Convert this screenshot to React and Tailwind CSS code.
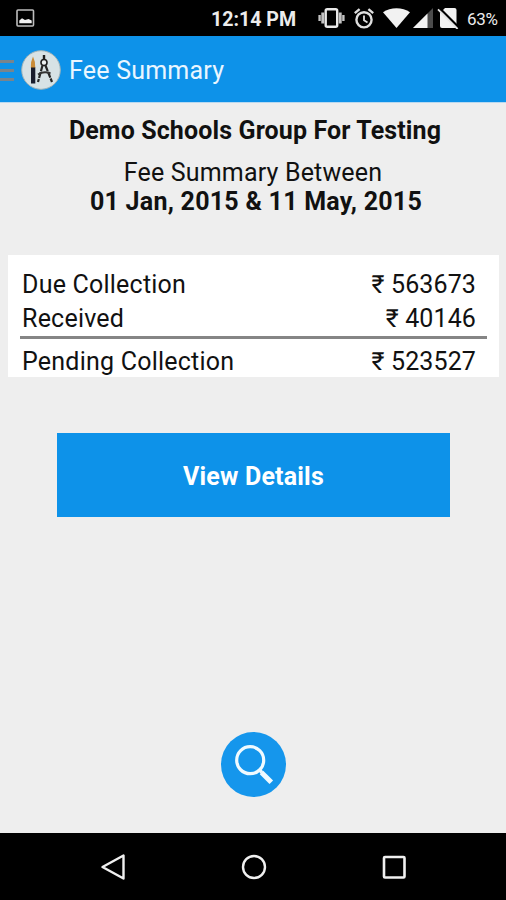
const fees = [
  { label: 'Due Collection', amount: '563673' },
  { label: 'Received', amount: '40146' },
]

export default function App() {
  return (
    <div className="flex h-[900px] w-[506px] flex-col overflow-hidden bg-[#eeeeee] font-['Roboto',sans-serif] text-[#111111]">
      <StatusBar />

      {/* Action bar */}
      <header className="flex h-[67px] shrink-0 items-center border-b border-[#b9d9f0] bg-[#0d92e9] pt-[2px]">
        <div className="flex w-[14px] flex-col gap-[6px]">
          <span className="h-[3px] bg-[#78848d]" />
          <span className="h-[3px] bg-[#78848d]" />
          <span className="h-[3px] bg-[#78848d]" />
        </div>
        <LogoIcon />
        <h1 className="ml-[8px] pt-[2px] text-[25px] leading-[30px] tracking-[0.22px] text-[#eaf6ff]">Fee Summary</h1>
      </header>

      <main className="flex flex-1 flex-col">
        <div className="pt-[13px] text-center">
          <h2 className="pl-[4px] text-[25px] leading-[30px] font-bold tracking-[0.12px]">Demo Schools Group For Testing</h2>
          <p className="mt-[12px] text-[25px] leading-[29px] tracking-[0.17px]">Fee Summary Between</p>
          <p className="pl-[6px] text-[25px] leading-[30px] font-bold tracking-[0.25px]">01 Jan, 2015 &amp; 11 May, 2015</p>
        </div>

        {/* Totals */}
        <section className="mt-[38px] mr-[7px] ml-[8px] h-[122px] bg-white pt-[12px]">
          {fees.map((fee) => (
            <FeeRow key={fee.label} {...fee} />
          ))}
          <div className="mr-[12px] ml-[12px] h-[3px] bg-[#858585]" />
          <div className="pt-[5px]">
            <FeeRow label="Pending Collection" amount="523527" />
          </div>
        </section>

        <button className="mt-[56px] ml-[57px] h-[84px] w-[393px] bg-[#0d92e9] pt-[4px] text-[25px] font-bold tracking-[0.18px] text-white">
          View Details
        </button>

        <button className="mt-auto mb-[36.5px] ml-[221px] h-[65px] w-[65px] rounded-full bg-[#1596ec]">
          <SearchIcon />
        </button>
      </main>

      <NavBar />
    </div>
  )
}

function FeeRow({ label, amount }) {
  return (
    <div className="flex h-[34.5px] items-center justify-between pr-[23px] pl-[14px] text-[25px] leading-[35px]">
      <span className="tracking-[0.22px]">{label}</span>
      <span className="tracking-[0.12px]">₹ {amount}</span>
    </div>
  )
}

function StatusBar() {
  return (
    <div className="flex h-[36px] shrink-0 items-center bg-black text-[#ececec]">
      <svg className="ml-[16px] h-[18px] w-[19px]" viewBox="0 0 19 18" fill="none">
        <rect x="1" y="1" width="16.5" height="16" rx="1" stroke="#bdbdbd" strokeWidth="1.6" />
        <path d="M3.3 14.2V11.5L6 9.2l3 1.8 3.5-1 3.2 1.5v2.7z" fill="#f2f2f2" />
      </svg>
      <span className="ml-[176px] w-[85px] pt-[3px] text-[19.6px] font-bold whitespace-nowrap">12:14 PM</span>

      {/* Vibrate */}
      <svg className="ml-[22px] h-[20px] w-[27px]" viewBox="0 0 27 20" fill="none">
        <rect x="7.7" y="1.2" width="11.5" height="17.6" rx="1.5" stroke="#e8e8e8" strokeWidth="2.4" />
        <path d="M4.8 4.5v11M22.2 4.5v11" stroke="#c4c4c4" strokeWidth="3" />
        <path d="M1.6 7v6M25.4 7v6" stroke="#c4c4c4" strokeWidth="2.4" />
      </svg>

      {/* Alarm */}
      <svg className="ml-[9px] h-[21px] w-[20px]" viewBox="0 0 20 21" fill="none" stroke="#dedede">
        <circle cx="10" cy="11.8" r="7.6" strokeWidth="2.4" />
        <path d="M10 7.5v4.8l3.5 2.2" strokeWidth="1.8" />
        <path d="M.8 5.2 5.6 1.2M14.4 1.2l4.8 4" strokeWidth="2.4" />
      </svg>

      {/* Wifi */}
      <svg className="ml-[9px] h-[20px] w-[27px]" viewBox="0 0 27 20" fill="#f2f2f2">
        <path d="M0 4.2C7.5-1.2 19.5-1.2 27 4.2L13.5 20z" />
      </svg>

      {/* Signal */}
      <svg className="ml-[3px] h-[20px] w-[20px]" viewBox="0 0 20 20">
        <path d="M0 20 20 0v20z" fill="#4b4b4b" />
        <path d="M0 20 14.5 5.5V20z" fill="#f2f2f2" />
      </svg>

      {/* No sim */}
      <svg className="ml-[4px] h-[22px] w-[22px]" viewBox="0 0 22 22">
        <path d="M8 1h9.5q2 0 2 2v18H5q-2 0-2-2V6z" fill="#f2f2f2" />
        <path d="M2.4 1 22 20.6" stroke="#000" strokeWidth="2.4" />
        <path d="M1 2.4 20.6 22" stroke="#e5e5e5" strokeWidth="1.8" />
      </svg>
      <span className="ml-[8px] pt-[3px] text-[17px] tracking-[-0.3px] whitespace-nowrap">63%</span>
    </div>
  )
}

function LogoIcon() {
  return (
    <svg className="ml-[7px] h-[40px] w-[40px]" viewBox="0 0 40 40" fill="none">
      <circle cx="20" cy="20" r="19.3" fill="#d7e2e5" stroke="#9fb3b8" strokeWidth="1" />
      {/* Brush */}
      <path d="M9.8 18Q9.3 12 12 6.5q2.700 5.500 2.300 11.500z" fill="#c98b38" />
      <path d="M10 17.500h4.300V33.500H10z" fill="#191c2c" />
      {/* Compass */}
      <path d="M23 5v5" stroke="#1e1e1e" strokeWidth="2.4" />
      <circle cx="23" cy="12.5" r="3" stroke="#1e1e1e" strokeWidth="1.6" fill="#eef2f3" />
      <path d="M21.5 15.5 17 32M24.5 15.5 31 32" stroke="#252525" strokeWidth="2.2" strokeDasharray="6 1" />
      <path d="M17 24.5q6-4 12.5-1" stroke="#333" strokeWidth="2" />
    </svg>
  )
}

function SearchIcon() {
  return (
    <svg className="h-[65px] w-[65px]" viewBox="0 0 65 65" fill="none" stroke="#f0faff">
      <circle cx="29.2" cy="28.2" r="13.5" strokeWidth="3.2" />
      <path d="m38.500 38 2.500 2.500" strokeWidth="3.4" />
      <path d="M40.500 40.500 50.300 50.300" strokeWidth="5" />
    </svg>
  )
}

function NavBar() {
  return (
    <nav className="flex h-[67px] shrink-0 items-center justify-between bg-black pr-[99px] pl-[100px]">
      <svg className="h-[28px] w-[26px]" viewBox="0 0 26 28" fill="none" stroke="#f0f0f0" strokeWidth="2.4">
        <path d="M23.5 2.5v23L2.5 14z" strokeLinejoin="round" />
      </svg>
      <svg className="h-[26px] w-[26px]" viewBox="0 0 26 26" fill="none" stroke="#f0f0f0" strokeWidth="2.4">
        <circle cx="13" cy="13" r="11" />
      </svg>
      <svg className="h-[26px] w-[26px]" viewBox="0 0 26 26" fill="none" stroke="#f0f0f0" strokeWidth="2.6">
        <rect x="3" y="3" width="20.5" height="20.5" rx="1" />
      </svg>
    </nav>
  )
}
